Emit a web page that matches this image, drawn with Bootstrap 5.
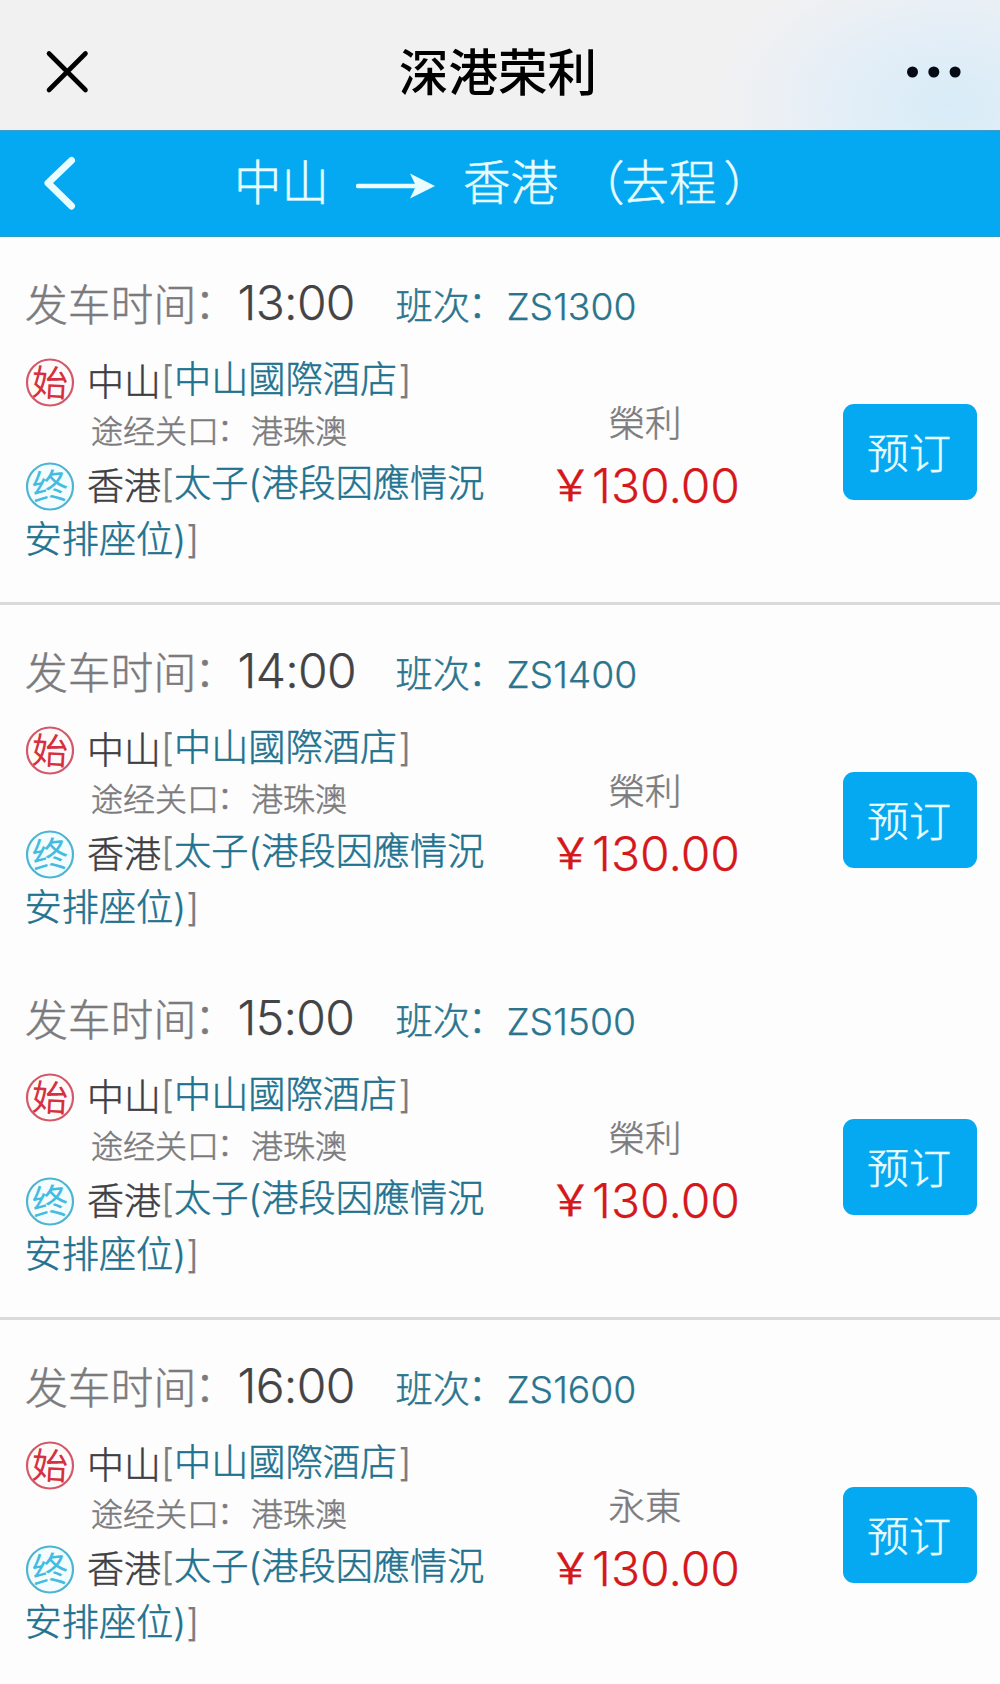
<!DOCTYPE html>
<html lang="zh-CN">
<head>
<meta charset="utf-8">
<meta name="viewport" content="width=device-width, initial-scale=1">
<title>深港荣利</title>
<link href="https://cdn.jsdelivr.net/npm/bootstrap@5.3.0/dist/css/bootstrap.min.css" rel="stylesheet">
<style>
body{font-family:"Noto Sans CJK SC",sans-serif;font-weight:300;background:#fdfdfe;color:#7b7b7d;overflow-x:hidden;-webkit-text-stroke:.5px currentColor}
.latin{font-family:Inter,"Noto Sans CJK SC",sans-serif;font-weight:300;-webkit-text-stroke:.25px currentColor}
.topbar{height:130px;padding:13px 39px 0 42px;color:#000;background:radial-gradient(ellipse 230px 150px at 950px 105px,#d8ecf7 0%,#e3eef7 45%,rgba(241,241,242,0) 100%),#f1f1f2}
.topbar h1{font-size:49.5px;line-height:60px;font-weight:500;padding-right:2px;padding-bottom:4px;-webkit-text-stroke:0}
.routebar{height:107px;background:#04a9f1;color:#e9fdff;border-top:1px solid #3c9bcb;border-bottom:1px solid #2b9cc4;padding-left:43px;font-size:47.5px;line-height:60px}
.routebar span{margin-bottom:8px}
.routebar .chev{margin-right:157px}
.routebar .arrow{margin:4px 28px 0 27px}
.routebar .leg{margin-left:19px}
.leg b{font-weight:300}
.leg .open{margin-right:-3px}
.leg .close-mark{margin-left:7px}
.trip{height:347px;padding:25px 23px 0 25px}
.trip.ruled{height:368px;border-bottom:3px solid #dadada}
.depart{height:80px;line-height:80px;font-size:42.8px;white-space:nowrap}
.depart .clock{font-size:48px;color:#444446;width:158px;letter-spacing:-.7px;padding-top:1px}
.depart .lbl{width:212.500px}
.depart .code{font-size:37.3px;color:#2a758d;padding-top:2px}
.depart .code .latin{margin-left:-1px}
.colon{vertical-align:2px;line-height:0;margin-left:-2px;margin-right:2px}
.route{width:480px;font-size:37.2px;white-space:nowrap}
.route svg{overflow:visible}
.route a,.tail a{color:#21728f;text-decoration:none}
.stop{height:73px}
.stop.end{height:71px}
.stop .city{color:#3f3f42;margin:4px 0 0 13px;font-size:37px}
.via{height:32px;line-height:28px;font-size:32px;padding-left:66px}
.tail{height:40px;line-height:38px}
.tail a{margin-left:-.5px}
.shut{margin-left:1.5px}
.fare{width:240px;padding-top:55px;margin-left:20px}
.fare .firm{font-size:36.5px;line-height:50px}
.fare .price{font-size:48px;line-height:60px;padding-top:9px;color:#d5181c;white-space:nowrap}
.yen{font-size:43px;font-weight:400;vertical-align:2px;line-height:0;margin-right:0;margin-left:-1px}
.book{width:134px;height:96px;margin-top:62px;background:#04a9f1;color:#e9fdff;border-radius:11px;font-size:42px;font-weight:300;padding:0 2px 3px 0;border:0}
</style>
<script src="https://cdn.jsdelivr.net/npm/bootstrap@5.3.0/dist/js/bootstrap.bundle.min.js"></script>
</head>
<body>
<header class="topbar d-flex align-items-center justify-content-between">
  <svg width="49" height="44" viewBox="0 0 49 44"><path d="M7 3.500L43.500 40M43.500 3.500L7 40" stroke="#000" stroke-width="4.600" stroke-linecap="round"/></svg>
  <h1 class="m-0">深港荣利</h1>
  <svg width="54" height="12" viewBox="0 0 54 12"><g fill="#050a14"><circle cx="5.500" cy="6" r="5.500"/><circle cx="26.800" cy="6" r="5.500"/><circle cx="48.100" cy="6" r="5.500"/></g></svg>
</header>
<nav class="routebar d-flex align-items-center">
  <svg class="chev" width="34" height="56" viewBox="0 0 34 56"><path d="M28.500 4.500L5 27L28.500 50" fill="none" stroke="#e9fdff" stroke-width="7" stroke-linecap="round" stroke-linejoin="round"/></svg>
  <span class="from">中山</span>
  <svg class="arrow" width="79" height="26" viewBox="0 0 79 26"><path d="M2 13H64" stroke="#e9fdff" stroke-width="4.500" stroke-linecap="round"/><path d="M54 0.500L79 13L54 25.500L60 13Z" fill="#e9fdff"/></svg>
  <span class="to">香港</span>
  <span class="leg"><b class="open">（</b>去程<b class="close-mark">）</b></span>
</nav>
<main id="trips"></main>
<script>
const trips=[["13:00","ZS1300","榮利",1],["14:00","ZS1400","榮利",0],["15:00","ZS1500","榮利",1],["16:00","ZS1600","永東",0]];
const mark=(ch,ring,ink,fill,turn)=>`<svg class="mt-2" width="49" height="49" viewBox="0 0 49 49"><circle cx="25" cy="24.500" r="23" fill="${fill}" stroke="${ring}" stroke-width="2.200"/><text x="25" y="38" text-anchor="middle" font-size="36" font-weight="400" fill="${ink}" stroke="none" transform="rotate(${turn} 24.500 24.500)">${ch}</text></svg>`;
const start=mark("始","#d2596a","#d5303f","#fffafa",3), end=mark("终","#4db4d2","#45bbdf","#f3fdff",-6);
document.getElementById("trips").innerHTML=trips.map(([t,c,f,r])=>`
<section class="trip ${r?"ruled":""}">
  <div class="depart d-flex"><span class="lbl">发车时间<span class="colon">：</span></span><span class="clock latin">${t}</span><span class="code">班次<span class="colon">：</span><span class="latin">${c}</span></span></div>
  <div class="d-flex align-items-start">
    <div class="route">
      <div class="stop d-flex align-items-center">${start}<span class="city">中山</span><span><span class="latin">[</span><a href="#">中山國際酒店</a><span class="latin shut">]</span></span></div>
      <div class="via">途经关口<span class="colon">：</span>港珠澳</div>
      <div class="stop end d-flex align-items-center">${end}<span class="city">香港</span><span><span class="latin">[</span><a href="#">太子<span class="latin">(</span>港段因應情況</a></span></div>
      <div class="tail"><a href="#">安排座位<span class="latin">)</span></a><span class="latin">]</span></div>
    </div>
    <div class="fare text-center"><div class="firm">${f}</div><div class="price latin"><span class="yen">￥</span>130.00</div></div>
    <button class="book btn ms-auto">预订</button>
  </div>
</section>`).join("");
</script>
</body>
</html>
